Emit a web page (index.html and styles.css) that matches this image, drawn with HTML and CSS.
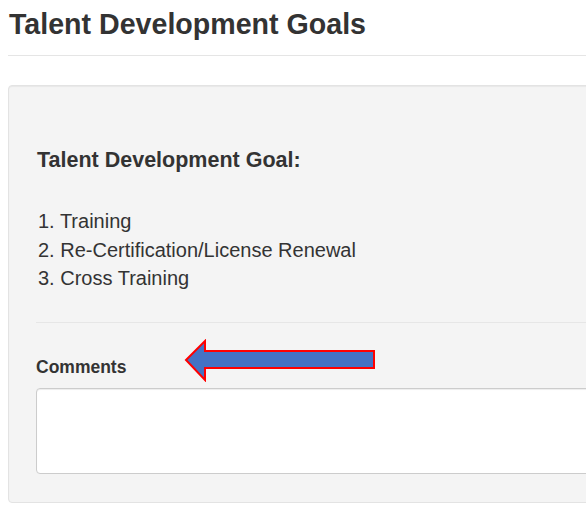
FILE: index.html
```html
<!DOCTYPE html>
<html lang="en">
  <head>
    <meta charset="UTF-8" />
    <meta name="viewport" content="width=device-width, initial-scale=1.0" />
    <title>Talent Development Goals</title>
    <link rel="stylesheet" href="styles.css">
  </head>
  <body>
    <div class="page">
      <h1 class="page-title">Talent Development Goals</h1>
      <hr class="title-rule" />

      <div class="well">
        <h2 class="goal-title">Talent Development Goal:</h2>
        <ul class="goal-list">
          <li>1. Training</li>
          <li>2. Re-Certification/License Renewal</li>
          <li>3. Cross Training</li>
        </ul>

        <hr class="well-rule" />

        <div class="comments-label">
          <label for="comments">Comments</label>
          <!-- pointer arrow -->
          <svg class="pointer" width="192" height="43" viewBox="0 0 192 43">
            <polygon points="2,21 21,2 21,12 190,12 190,29 21,29 21,41" fill="#4472c4" stroke="#ff0000" stroke-width="2" />
          </svg>
        </div>
        <textarea id="comments" class="comments-box"></textarea>
      </div>
    </div>
  </body>
</html>
```

FILE: styles.css
```css
* {
  box-sizing: border-box;
}

body {
  font-family: "Liberation Sans", Arial, sans-serif;
  color: #333;
  background-color: #fff;
  margin: 0;
  padding: 0;
  overflow: hidden;
}

.page {
  width: 586px;
  padding: 0 0 0 8px;
}

.page-title {
  font-size: 28.6px;
  font-weight: bold;
  line-height: 36px;
  margin: 6px 0 0 1px;
  white-space: nowrap;
}

.title-rule {
  border: 0;
  border-top: 1px solid #e5e5e5;
  margin: 13px 0 0 0;
}

/* the well runs off the right side of the window */
.well {
  margin-top: 29px;
  margin-right: -40px;
  background-color: #f4f4f4;
  border: 1px solid #e3e3e3;
  border-radius: 4px;
  box-shadow: inset 0 1px 1px rgba(0, 0, 0, 0.05);
  padding: 28px 27px 28px 27px;
}

.goal-title {
  font-size: 21.5px;
  font-weight: bold;
  line-height: 30px;
  margin: 31px 0 0 1px;
}

.goal-list {
  list-style: none;
  margin: 32px 0 0 0;
  padding: 0 0 0 2px;
  font-size: 20px;
  line-height: 28.57px;
}

.well-rule {
  border: 0;
  border-top: 1px solid #e6e6e6;
  margin: 29px 0 0 0;
}

.comments-label {
  position: relative;
  margin-top: 31px;
  font-size: 17.5px;
  font-weight: bold;
  line-height: 26px;
}

.comments-label .pointer {
  position: absolute;
  left: 148px;
  top: -15px;
}

.comments-box {
  display: block;
  width: 100%;
  height: 86px;
  margin-top: 8px;
  background: #fff;
  border: 1px solid #ccc;
  border-radius: 4px;
  box-shadow: inset 0 1px 1px rgba(0, 0, 0, 0.075);
  resize: none;
  font-family: inherit;
}
```
